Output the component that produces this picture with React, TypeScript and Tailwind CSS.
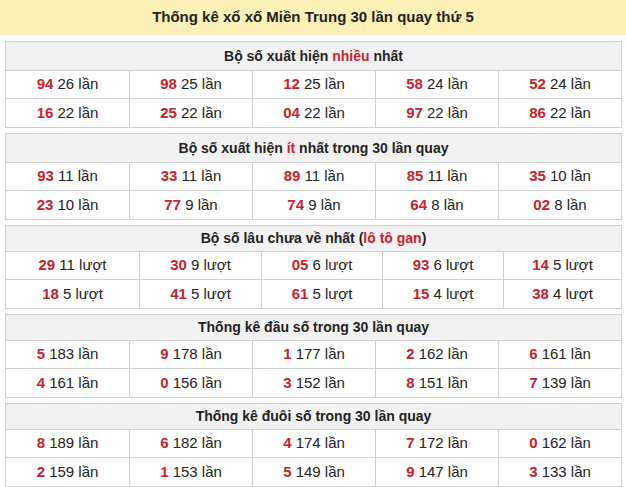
import React from 'react';

type Cell = [string, string];

type Block = {
  title: React.ReactNode;
  rows: Cell[][];
  cols: string;
  head: string;
};

const red = 'text-[#c8232c]';

const blocks: Block[] = [
  {
    title: (
      <>
        Bộ số xuất hiện <span className={red}>nhiều</span> nhất
      </>
    ),
    head: 'h-[29px]',
    cols: 'grid-cols-5',
    rows: [
      [['94', '26 lần'], ['98', '25 lần'], ['12', '25 lần'], ['58', '24 lần'], ['52', '24 lần']],
      [['16', '22 lần'], ['25', '22 lần'], ['04', '22 lần'], ['97', '22 lần'], ['86', '22 lần']],
    ],
  },
  {
    title: (
      <>
        Bộ số xuất hiện <span className={red}>ít</span> nhất trong 30 lần quay
      </>
    ),
    head: 'h-[29px]',
    cols: 'grid-cols-5',
    rows: [
      [['93', '11 lần'], ['33', '11 lần'], ['89', '11 lần'], ['85', '11 lần'], ['35', '10 lần']],
      [['23', '10 lần'], ['77', '9 lần'], ['74', '9 lần'], ['64', '8 lần'], ['02', '8 lần']],
    ],
  },
  {
    title: (
      <>
        Bộ số lâu chưa về nhất (<span className={red}>lô tô gan</span>)
      </>
    ),
    head: 'h-[26px]',
    cols: 'grid-cols-[133px_122px_121px_121px_1fr]',
    rows: [
      [['29', '11 lượt'], ['30', '9 lượt'], ['05', '6 lượt'], ['93', '6 lượt'], ['14', '5 lượt']],
      [['18', '5 lượt'], ['41', '5 lượt'], ['61', '5 lượt'], ['15', '4 lượt'], ['38', '4 lượt']],
    ],
  },
  {
    title: 'Thống kê đầu số trong 30 lần quay',
    head: 'h-[26px]',
    cols: 'grid-cols-5',
    rows: [
      [['5', '183 lần'], ['9', '178 lần'], ['1', '177 lần'], ['2', '162 lần'], ['6', '161 lần']],
      [['4', '161 lần'], ['0', '156 lần'], ['3', '152 lần'], ['8', '151 lần'], ['7', '139 lần']],
    ],
  },
  {
    title: 'Thống kê đuôi số trong 30 lần quay',
    head: 'h-[26px]',
    cols: 'grid-cols-5',
    rows: [
      [['8', '189 lần'], ['6', '182 lần'], ['4', '174 lần'], ['7', '172 lần'], ['0', '162 lần']],
      [['2', '159 lần'], ['1', '153 lần'], ['5', '149 lần'], ['9', '147 lần'], ['3', '133 lần']],
    ],
  },
];

const StatBlock: React.FC<{ block: Block }> = ({ block }) => (
  <div className="border border-[#cfcfcf] bg-white">
    <div
      className={`${block.head} flex items-center justify-center bg-[#f2f2f2] border-b border-[#cfcfcf] text-[14px] font-bold text-[#222]`}
    >
      <span>{block.title}</span>
    </div>
    {block.rows.map((row, r) => (
      <div
        key={r}
        className={`grid ${block.cols} h-[28px] ${r < block.rows.length - 1 ? 'border-b border-[#cfcfcf]' : ''}`}
      >
        {row.map(([num, count], i) => (
          <div
            key={i}
            className={`flex items-center justify-center text-[15px] text-[#222] ${i > 0 ? 'border-l border-[#cfcfcf]' : ''}`}
          >
            <span>
              <span className={`font-bold ${red}`}>{num}</span> {count}
            </span>
          </div>
        ))}
      </div>
    ))}
  </div>
);

const App: React.FC = () => {
  return (
    <div className="w-[626px] h-[487px] overflow-hidden bg-white font-['Liberation_Sans',Arial,sans-serif]">
      <div className="h-[35px] bg-[#fdf0b6] flex items-center justify-center text-[15px] font-bold text-[#222]">
        Thống kê xổ xố Miền Trung 30 lần quay thứ 5
      </div>
      <div className="ml-[5px] mr-[4px] mt-[6px] flex flex-col gap-[5px]">
        {blocks.map((b, i) => (
          <StatBlock key={i} block={b} />
        ))}
      </div>
    </div>
  );
};

export default App;
